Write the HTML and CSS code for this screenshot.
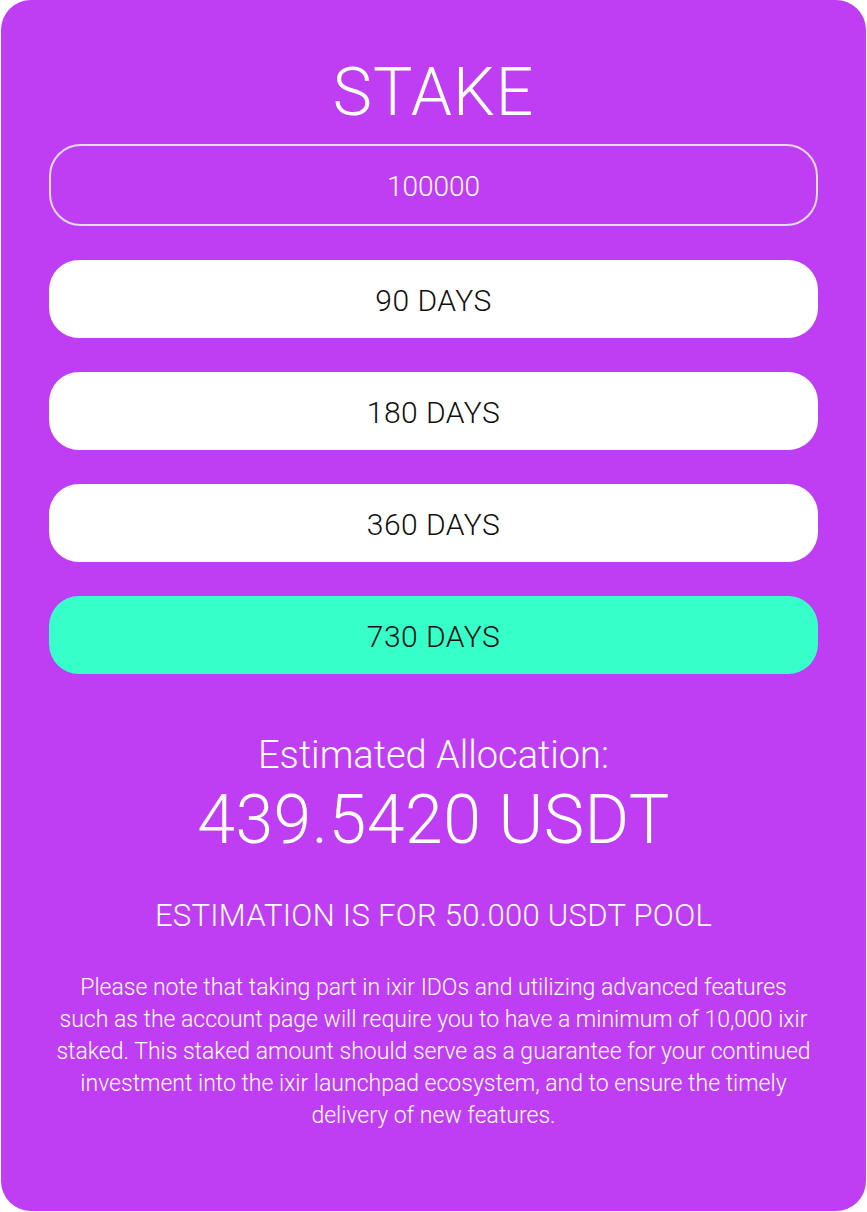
FILE: index.html
```html
<!DOCTYPE html>
<html lang="en">
<head>
    <meta charset="UTF-8">
    <meta name="viewport" content="width=device-width, initial-scale=1.0">
    <title>Stake</title>
    <link rel="stylesheet" href="styles.css">
</head>
<body>

    <div class="card">
        <h1 class="title">STAKE</h1>

        <!-- Amount -->
        <input type="text" class="amount" value="100000">

        <!-- Lock periods -->
        <div class="periods">
            <button class="period">90 DAYS</button>
            <button class="period">180 DAYS</button>
            <button class="period">360 DAYS</button>
            <button class="period active">730 DAYS</button>
        </div>

        <div class="estimate">
            <p class="estimate-label">Estimated Allocation:</p>
            <p class="estimate-value">439.5420 USDT</p>
        </div>

        <p class="pool">ESTIMATION IS FOR 50.000 USDT POOL</p>

        <p class="note">
            Please note that taking part in ixir IDOs and utilizing advanced features<br>
            such as the account page will require you to have a minimum of 10,000 ixir<br>
            staked. This staked amount should serve as a guarantee for your continued<br>
            investment into the ixir launchpad ecosystem, and to ensure the timely<br>
            delivery of new features.
        </p>
    </div>

</body>
</html>
```

FILE: styles.css
```css
* {
    box-sizing: border-box;
}
body {
    margin: 0;
    background-color: #fff;
    font-family: Roboto, "Liberation Sans", sans-serif;
    font-weight: 300;
}
.card {
    width: 865px;
    height: 1211px;
    margin-left: 1px;
    background-color: #bf3ef3;
    border-radius: 30px;
    padding: 50px 48px 0 48px;
    color: #fff;
    text-align: center;
}
.title {
    margin: 0;
    font-size: 66px;
    font-weight: 300;
    line-height: 86px;
    letter-spacing: 1px;
}
.amount {
    display: block;
    width: 100%;
    height: 82px;
    margin-top: 8px;
    background: transparent;
    border: 2px solid #e2dcea;
    border-radius: 32px;
    color: #fff;
    font-family: inherit;
    font-weight: 300;
    font-size: 28px;
    text-align: center;
    padding-top: 4px;
    outline: none;
}
.periods {
    display: flex;
    flex-direction: column;
    gap: 34px;
    margin-top: 34px;
}
.period {
    height: 78px;
    border: none;
    border-radius: 30px;
    background-color: #fff;
    color: #111;
    font-family: inherit;
    font-weight: 300;
    font-size: 30px;
    letter-spacing: 0.5px;
    padding-top: 4px;
    cursor: pointer;
}
.period.active {
    background-color: #36ffca;
}
.estimate {
    margin-top: 56px;
}
.estimate p {
    margin: 0;
}
.estimate-label {
    font-size: 38px;
    line-height: 50px;
}
.estimate-value {
    font-size: 68px;
    line-height: 80px;
    letter-spacing: 0.5px;
}
.pool {
    margin: 36px 0 0;
    font-size: 31px;
    line-height: 40px;
    letter-spacing: 0.3px;
}
.note {
    margin: 36px 0 0;
    font-size: 23px;
    line-height: 32px;
}
```
